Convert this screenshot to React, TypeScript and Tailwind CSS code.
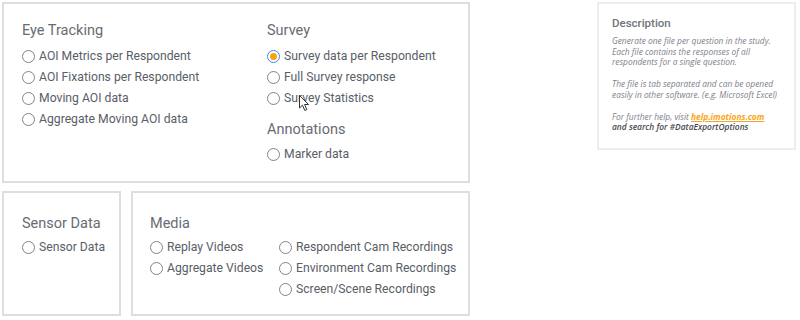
import React from "react";

const Radio = ({ checked = false }: { checked?: boolean }) => {
    if (checked) {
        return (
            <span className="w-[13px] h-[13px] rounded-full border-[1.5px] border-[#3a8ddd] bg-white flex items-center justify-center shrink-0">
                <span className="w-[7px] h-[7px] rounded-full bg-[#f5a40f]"></span>
            </span>
        );
    }
    return <span className="w-[13px] h-[13px] rounded-full border border-[#80848b] bg-white shrink-0"></span>;
};

const Option = ({ label, checked }: { label: string; checked?: boolean }) => (
    <div className="flex items-center gap-[4px] h-[21px] text-[12.2px] text-[#595e67] whitespace-nowrap">
        <Radio checked={checked} />
        <span>{label}</span>
    </div>
);

const Heading = ({ children, className = "" }: { children: React.ReactNode; className?: string }) => (
    <p className={"text-[14.5px] leading-[20px] text-[#676b73] " + className}>{children}</p>
);

const Cursor = () => (
    <svg className="absolute left-[299px] top-[95px]" width="11" height="17" viewBox="0 0 11 17">
        <path d="M0.5 0.5 L0.5 13 L3.5 10.2 L5.8 15.5 L7.8 14.6 L5.6 9.5 L9.6 9.5 Z" fill="#fff" stroke="#333" strokeWidth="1" strokeLinejoin="round" />
    </svg>
);

export default function App() {
    return (
        <div className="relative flex w-[800px] h-[320px] bg-white pt-[2px] pl-[2px]" style={{ fontFamily: 'Roboto, "Open Sans", sans-serif' }}>
            <div className="flex flex-col gap-[8px]">
                <div className="w-[468px] h-[181px] border-2 border-[#dcdee2] pt-[17px] pl-[18px] flex">
                    <div className="w-[245px] shrink-0">
                        <Heading className="mb-[5px]">Eye Tracking</Heading>
                        <Option label="AOI Metrics per Respondent" />
                        <Option label="AOI Fixations per Respondent" />
                        <Option label="Moving AOI data" />
                        <Option label="Aggregate Moving AOI data" />
                    </div>
                    <div>
                        <Heading className="mb-[5px]">Survey</Heading>
                        <Option label="Survey data per Respondent" checked />
                        <Option label="Full Survey response" />
                        <Option label="Survey Statistics" />
                        <Heading className="mt-[11px] mb-[4px]">Annotations</Heading>
                        <Option label="Marker data" />
                    </div>
                </div>
                <div className="flex gap-[10px]">
                    <div className="w-[119px] h-[125px] border-2 border-[#dcdee2] pt-[21px] pl-[18px]">
                        <Heading className="mb-[3px]">Sensor Data</Heading>
                        <Option label="Sensor Data" />
                    </div>
                    <div className="w-[339px] h-[125px] border-2 border-[#dcdee2] pt-[21px] pl-[17px]">
                        <Heading className="mb-[3px]">Media</Heading>
                        <div className="flex">
                            <div className="w-[129px] shrink-0">
                                <Option label="Replay Videos" />
                                <Option label="Aggregate Videos" />
                            </div>
                            <div>
                                <Option label="Respondent Cam Recordings" />
                                <Option label="Environment Cam Recordings" />
                                <Option label="Screen/Scene Recordings" />
                            </div>
                        </div>
                    </div>
                </div>
            </div>
            <div className="ml-[127px] w-[199px] h-[148px] border-2 border-[#eceded] pt-[11px] pl-[13px] pr-[6px]">
                <p className="text-[11.5px] font-medium text-[#70747c] leading-[16px] mb-[5px]">Description</p>
                <div className="text-[8.4px] italic text-[#7d818a] leading-[10.7px]" style={{ fontFamily: '"Open Sans", sans-serif' }}>
                    <p>Generate one file per question in the study. Each file contains the responses of all respondents for a single question.</p>
                    <p className="mt-[11px]">The file is tab separated and can be opened easily in other software. (e.g. Microsoft Excel)</p>
                    <p className="mt-[11px]">
                        For further help, visit <span className="font-bold text-[#f7a51b] underline">help.imotions.com</span>
                        <br />
                        <span className="font-semibold text-[#454850]">and search for #DataExportOptions</span>
                    </p>
                </div>
            </div>
            <Cursor />
        </div>
    );
}
